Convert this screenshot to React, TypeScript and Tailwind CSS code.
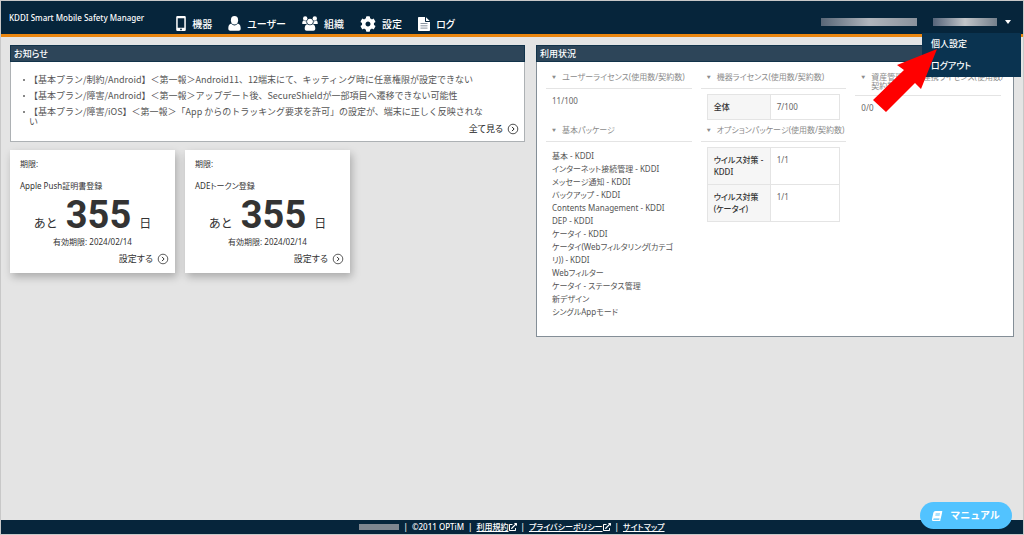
import type { ReactNode } from "react";
import { FaBook, FaCog, FaExternalLinkAlt } from "react-icons/fa";

type NavItem = {
  label: string;
  icon: ReactNode;
};

type PackageRow = {
  name: string;
  value: string;
};

type DeadlineItem = {
  title: string;
  days: number;
  expires: string;
};

const NAV_ITEMS: NavItem[] = [
  { label: "機器", icon: <PhoneIcon /> },
  { label: "ユーザー", icon: <UserIcon /> },
  { label: "組織", icon: <GroupIcon /> },
  { label: "設定", icon: <FaCog className="size-4" /> },
  { label: "ログ", icon: <LogIcon /> },
];

const NEWS = [
  "【基本プラン/制約/Android】＜第一報＞Android11、12端末にて、キッティング時に任意権限が設定できない",
  "【基本プラン/障害/Android】＜第一報＞アップデート後、SecureShieldが一部項目へ遷移できない可能性",
  "【基本プラン/障害/iOS】＜第一報＞「App からのトラッキング要求を許可」の設定が、端末に正しく反映されない",
];

const DEADLINES: DeadlineItem[] = [
  { title: "Apple Push証明書登録", days: 355, expires: "2024/02/14" },
  { title: "ADEトークン登録", days: 355, expires: "2024/02/14" },
];

const BASE_PACKAGES = [
  "基本 - KDDI",
  "インターネット接続管理 - KDDI",
  "メッセージ通知 - KDDI",
  "バックアップ - KDDI",
  "Contents Management - KDDI",
  "DEP - KDDI",
  "ケータイ - KDDI",
  "ケータイ(Webフィルタリング(カテゴリ)) - KDDI",
  "Webフィルター",
  "ケータイ - ステータス管理",
  "新デザイン",
  "シングルAppモード",
];

const OPTION_PACKAGES: PackageRow[] = [
  { name: "ウイルス対策 - KDDI", value: "1/1" },
  { name: "ウイルス対策 (ケータイ)", value: "1/1" },
];

function PhoneIcon() {
  return (
    <svg viewBox="0 0 10 15" className="h-[15px] w-2.5" aria-hidden="true">
      <path
        fill="currentColor"
        fillRule="evenodd"
        d="M1.400 0h7.200a1.200 1.200 0 0 1 1.200 1.200v12.600A1.200 1.200 0 0 1 8.600 15H1.400A1.200 1.200 0 0 1 .2 13.800V1.200A1.200 1.200 0 0 1 1.400 0ZM1.700 2.200v9.600h6.600V2.200ZM5 12.500a.9.9 0 1 0 0 1.800.9.9 0 0 0 0-1.800Z"
      />
    </svg>
  );
}

function UserIcon() {
  return (
    <svg viewBox="0 0 13 15" className="h-[15px] w-[13px]" fill="currentColor" aria-hidden="true">
      <ellipse cx="6.500" cy="4.300" rx="3.600" ry="4.200" />
      <path d="M3.200 7.600C1 8.400.3 9.800.3 12.600.3 14.200 1.100 14.800 2.200 14.800h8.600c1.100 0 1.900-.6 1.900-2.200 0-2.800-.7-4.200-2.900-5C9 8.800 7.900 9.400 6.500 9.400S4 8.800 3.200 7.600Z" />
    </svg>
  );
}

function GroupIcon() {
  return (
    <svg viewBox="0 0 16 15" className="h-[15px] w-4" fill="currentColor" aria-hidden="true">
      <circle cx="3.200" cy="2.500" r="2.200" />
      <circle cx="12.800" cy="2.500" r="2.200" />
      <path d="M.2 7.800C.2 5.800.8 4.800 1.600 4.500c1 .8 2.100.8 2.900.4-.3 1.400 0 2.300.4 3.100H1.600C.6 8 .2 8 .2 7.800ZM15.800 7.800c0-2-.6-3-1.400-3.300-1 .8-2.100.8-2.900.4.3 1.400 0 2.300-.4 3.100h3.300c1 0 1.400 0 1.400-.2Z" />
      <circle cx="8" cy="5.600" r="2.900" />
      <path d="M5.200 8.300c-1.800.4-2.500 1.900-2.500 4.300 0 1.500.8 2.200 1.900 2.200h6.800c1.100 0 1.900-.7 1.900-2.200 0-2.400-.7-3.900-2.500-4.300C9.300 9.600 6.700 9.600 5.200 8.300Z" />
    </svg>
  );
}

function LogIcon() {
  return (
    <svg viewBox="0 0 12 14" className="h-3.5 w-3" aria-hidden="true">
      <path fill="currentColor" d="M.8 0H7v4.200c0 .5.3.8.8.8H12v8.200c0 .5-.3.8-.8.8H.8c-.5 0-.8-.3-.8-.8V.8C0 .3.300 0 .8 0ZM8 .2 11.800 4H8Z" />
      <path stroke="#8b95a0" d="M2.500 6.500h7M2.500 8.800h7M2.500 11.100h7" />
    </svg>
  );
}

function CircleArrow() {
  return (
    <svg viewBox="0 0 12 12" className="size-3" fill="none" stroke="currentColor" strokeWidth="0.800" aria-hidden="true">
      <circle cx="6" cy="6" r="4.800" />
      <path d="M5 3.900 7.100 6 5 8.100" strokeWidth="1" />
    </svg>
  );
}

function PanelTitle({ children }: { children: ReactNode }) {
  return (
    <h2 className="border border-[#12334a] bg-[#2d4559] px-[3px] text-[9px] leading-[15px] font-medium text-white">
      {children}
    </h2>
  );
}

function StatusTitle({ children }: { children: ReactNode }) {
  return (
    <h3 className="flex gap-1.5 border-b border-[#e4e4e4] px-1.5 pt-1 pb-[5px] text-[8px] leading-[9px] font-normal text-[#8c8c8c]">
      <span className="text-[4px] leading-[11px]">▼</span>
      <span className="whitespace-nowrap">{children}</span>
    </h3>
  );
}

function PackageTable({ rows }: { rows: PackageRow[] }) {
  return (
    <table className="mx-1.5 mt-[5px] mb-px w-[133px] border-collapse text-left text-[8px] leading-3">
      <tbody>
        {rows.map((row) => (
          <tr key={row.name}>
            <th scope="row" className="w-[63px] border border-[#e4e4e4] bg-[#f6f6f6] px-1.5 py-1.5 font-medium text-[#333]">
              {row.name}
            </th>
            <td className="border border-[#e4e4e4] px-1.5 py-1.5 align-top text-[#666]">{row.value}</td>
          </tr>
        ))}
      </tbody>
    </table>
  );
}

function Header() {
  return (
    <header className="flex h-9 items-center justify-between border-b-3 border-[#ea860f] bg-[#06253b] pl-2 text-white">
      <div className="flex items-center">
        <h1 className="mr-8 text-[8px] font-medium whitespace-nowrap">KDDI Smart Mobile Safety Manager</h1>
        <nav className="flex gap-4 pt-3">
          {NAV_ITEMS.map((item) => (
            <a key={item.label} href="#" className="flex items-center gap-1.5 text-[10px] leading-4 font-medium whitespace-nowrap">
              {item.icon}
              {item.label}
            </a>
          ))}
        </nav>
      </div>
      <div className="relative flex items-center gap-4 pt-2 pr-3">
        <span className="h-2 w-24 bg-linear-to-r from-[#596777] via-[#b0b5bc] to-[#8a929c]" />
        <button type="button" aria-label="アカウント" className="flex items-center gap-2">
          <span className="h-2 w-16 bg-linear-to-r from-[#56657a] via-[#c2c5c9] to-[#75808c]" />
          <svg viewBox="0 0 6 4" className="h-1 w-1.5" fill="currentColor" aria-hidden="true">
            <path d="M0 0h6L3 4Z" />
          </svg>
        </button>
        <div className="absolute top-[23px] right-0.5 z-10 flex w-[99px] flex-col bg-[#0a3350] text-[9px] leading-[22px] font-medium">
          <a href="#" className="px-[9px]">個人設定</a>
          <a href="#" className="px-[9px]">ログアウト</a>
          <svg viewBox="0 0 64 64" className="absolute top-4 -left-[49px] size-16" aria-hidden="true">
            <path fill="#f00" d="M64 0 48 40 42 34 13 63 0 51 31 21 24 16Z" />
          </svg>
        </div>
      </div>
    </header>
  );
}

function NewsPanel() {
  return (
    <section>
      <PanelTitle>お知らせ</PanelTitle>
      <div className="border border-t-0 border-[#adb1b4] bg-white pt-2.5 pb-1.5">
        <ul className="pr-10 pl-[18px] font-['Noto_Sans_CJK_JP',sans-serif] text-[9px] text-[#555] [font-feature-settings:normal]">
          {NEWS.map((item) => (
            <li key={item} className="relative py-[3px] leading-[10px]">
              <span className="absolute top-[7px] -left-[6px] size-[2px] bg-[#888]" />
              <a href="#">{item}</a>
            </li>
          ))}
        </ul>
        <a href="#" className="-mt-[7px] mr-[5px] ml-auto flex w-fit items-center gap-1 text-[9px] leading-3 text-[#222]">
          全て見る
          <CircleArrow />
        </a>
      </div>
    </section>
  );
}

function DeadlineCard({ item }: { item: DeadlineItem }) {
  return (
    <article className="w-[165px] bg-white px-1.5 pt-2 pb-2 text-[8px] text-[#333] shadow-[2px_4px_8px_rgba(0,0,0,0.25)]">
      <p className="px-1 leading-3">期限:</p>
      <p className="mt-2.5 px-1 leading-3">{item.title}</p>
      <p className="flex items-baseline justify-center gap-2 text-[12px] leading-[46px] [font-feature-settings:normal]">
        あと
        <strong className="font-['Roboto',sans-serif] text-[38px] font-bold">{item.days}</strong>
        日
      </p>
      <p className="-mt-[11px] text-center leading-3">有効期限: {item.expires}</p>
      <a href="#" className="mt-[5px] flex items-center justify-end gap-1 text-[9px] leading-3">
        設定する
        <CircleArrow />
      </a>
    </article>
  );
}

function UsagePanel() {
  return (
    <section>
      <PanelTitle>利用状況</PanelTitle>
      <div className="grid grid-cols-3 gap-x-[9px] border border-t-0 border-[#848e97] bg-white pt-1.5 pr-3 pb-[18px] pl-[9px]">
        <div>
          <StatusTitle>ユーザーライセンス(使用数/契約数)</StatusTitle>
          <p className="h-8 px-1.5 pt-1.5 text-[8px] leading-3 text-[#666]">11/100</p>
          <StatusTitle>基本パッケージ</StatusTitle>
          <ul className="pt-[7px] pr-4 pl-1.5 text-[8px] leading-[13px] text-[#555]">
            {BASE_PACKAGES.map((name) => (
              <li key={name}>{name}</li>
            ))}
          </ul>
        </div>
        <div>
          <StatusTitle>機器ライセンス(使用数/契約数)</StatusTitle>
          <PackageTable rows={[{ name: "全体", value: "7/100" }]} />
          <StatusTitle>オプションパッケージ(使用数/契約数)</StatusTitle>
          <PackageTable rows={OPTION_PACKAGES} />
        </div>
        <div>
          <StatusTitle>
            資産管理ソフト連携ライセンス(使用数/
            <br />
            契約数)
          </StatusTitle>
          <p className="px-1.5 pt-1.5 text-[8px] leading-3 text-[#666]">0/0</p>
        </div>
      </div>
    </section>
  );
}

function Footer() {
  return (
    <footer className="flex items-center justify-center gap-1 border-b border-[#c8c8c8] bg-[#06253b] text-[8px] leading-[14px] font-medium text-white">
      <span className="h-1.5 w-10 bg-[#7f868f]" />
      <span>|</span>
      <span>©2011 OPTiM</span>
      <span>|</span>
      <a href="#" className="flex items-center underline">
        利用規約
        <FaExternalLinkAlt className="size-2" />
      </a>
      <span>|</span>
      <a href="#" className="flex items-center underline">
        プライバシーポリシー
        <FaExternalLinkAlt className="size-2" />
      </a>
      <span>|</span>
      <a href="#" className="underline">サイトマップ</a>
    </footer>
  );
}

export default function App() {
  return (
    <div
      lang="ja"
      className="flex min-h-screen flex-col border-x border-t border-[#c8c8c8] bg-[#e4e4e4] font-['Noto_Sans','Noto_Sans_CJK_JP',sans-serif] [font-feature-settings:'palt']"
    >
      <Header />
      <main className="grid flex-1 grid-cols-[minmax(0,515fr)_minmax(0,478fr)] items-start gap-[11px] px-[9px] pt-2">
        <div>
          <NewsPanel />
          <div className="mt-2 flex gap-2.5">
            {DEADLINES.map((item) => (
              <DeadlineCard key={item.title} item={item} />
            ))}
          </div>
        </div>
        <UsagePanel />
      </main>
      <Footer />
      <button
        type="button"
        className="fixed right-3 bottom-1.5 flex h-[27px] w-[92px] items-center justify-center gap-2 rounded-full bg-[#52c3ff] text-[10px] font-bold text-white [font-feature-settings:normal]"
      >
        <FaBook className="size-2.5 -skew-x-12" />
        マニュアル
      </button>
    </div>
  );
}
